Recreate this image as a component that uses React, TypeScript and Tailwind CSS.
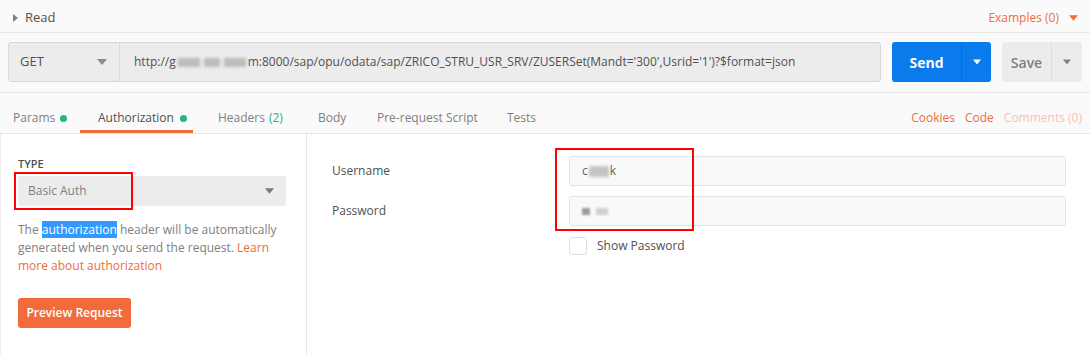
import { useState } from 'react';

const font = { fontFamily: '"Open Sans", "Noto Sans", sans-serif' };

function Caret({ className }: { className: string }) {
  return (
    <svg width="10" height="6" viewBox="0 0 10 6" className={className}>
      <path d="M0 0 L10 0 L5 6 Z" fill="currentColor" />
    </svg>
  );
}

function Smudge({ w }: { w: string }) {
  return (
    <span className={`inline-block h-[9px] ${w} bg-[#bdbdbd] blur-[1.5px] align-middle`} />
  );
}

export default function App() {
  const [show, setShow] = useState(false);

  return (
    <div
      style={font}
      className="w-[1090px] h-[354px] overflow-hidden bg-white text-[12px] text-[#505050]"
    >
      <div className="bg-[#fafafa]">
        <div className="h-[33px] flex items-center justify-between border-b border-[#e8e8e8] pl-[13px] pr-[12px] pt-[3px]">
          <div className="flex items-center">
            <svg width="5" height="8" viewBox="0 0 5 8" className="text-[#808080]">
              <path d="M0 0 L5 4 L0 8 Z" fill="currentColor" />
            </svg>
            <span className="ml-[7px] text-[13px] text-[#505050]">Read</span>
          </div>
          <div className="flex items-center text-[#f26b3a] text-[12px]">
            <span>Examples (0)</span>
            <Caret className="ml-[10px] text-[#f26b3a] w-[9px]" />
          </div>
        </div>

        <div className="flex items-center h-[60px] border-b border-[#e8e8e8] pl-[8px] pr-[8px] pb-[1px]">
          <div className="flex h-[40px] flex-1 rounded-[3px] border border-[#d8d8d8] bg-[#ececec]">
            <div className="w-[111px] flex items-center justify-between pl-[11px] pr-[12px] border-r border-[#d8d8d8]">
              <span className="text-[13px]">GET</span>
              <Caret className="text-[#8a8a8a]" />
            </div>
            <div className="flex items-center pl-[14px] whitespace-nowrap text-[#505050]">
              http://g
              <span className="inline-flex items-center gap-[4px] mx-[2px]">
                <Smudge w="w-[22px]" />
                <Smudge w="w-[16px]" />
                <Smudge w="w-[22px]" />
              </span>
              m:8000/sap/opu/odata/sap/ZRICO_STRU_USR_SRV/ZUSERSet(Mandt='300',Usrid='1')?$format=json
            </div>
          </div>
          <div className="ml-[11px] flex h-[40px] rounded-[3px] bg-[#097bed] text-white">
            <div className="w-[70px] flex items-center justify-center font-bold text-[14px] border-r border-[#0a6ad0]">
              Send
            </div>
            <div className="w-[29px] flex items-center justify-center">
              <Caret className="text-white w-[8px]" />
            </div>
          </div>
          <div className="ml-[11px] flex h-[40px] rounded-[3px] bg-[#ececec] text-[#808080]">
            <div className="w-[50px] flex items-center justify-center text-[14px] font-semibold border-r border-[#dcdcdc]">
              Save
            </div>
            <div className="w-[30px] flex items-center justify-center">
              <Caret className="text-[#808080] w-[8px]" />
            </div>
          </div>
        </div>

        <div className="flex justify-between items-stretch h-[41px] border-b border-[#e6e6e6] pr-[8px] whitespace-nowrap">
          <div className="flex items-stretch text-[#808080]">
            <div className="w-[80px] pl-[13px] pt-[10px] flex items-center">
              Params<span className="ml-[5px] w-[7px] h-[7px] rounded-full bg-[#26b47f]" />
            </div>
            <div className="w-[113px] pl-[18px] pt-[13px] flex items-center border-b-[3px] border-[#f26b3a] text-[#505050]">
              Authorization<span className="ml-[6px] w-[7px] h-[7px] rounded-full bg-[#26b47f]" />
            </div>
            <div className="w-[100px] pl-[25px] pt-[10px] flex items-center">
              Headers<span className="ml-[4px] text-[#26b47f]">(2)</span>
            </div>
            <div className="w-[59px] pl-[25px] pt-[10px] flex items-center">Body</div>
            <div className="w-[130px] pl-[25px] pt-[10px] flex items-center">Pre-request Script</div>
            <div className="pl-[25px] pt-[10px] flex items-center">Tests</div>
          </div>
          <div className="flex items-center gap-[10px] pt-[10px]">
            <span className="text-[#f26b3a]">Cookies</span>
            <span className="text-[#f26b3a]">Code</span>
            <span className="text-[#f8c3ad]">Comments (0)</span>
          </div>
        </div>
      </div>

      <div className="flex h-[220px]">
        <div className="w-[307px] border-l border-[#ececec] border-r border-r-[#e6e6e6] pl-[17px] pr-[20px] pt-[22px]">
          <div className="text-[11px] font-semibold text-[#505050] leading-[16px]">TYPE</div>
          <div className="relative mt-[4px]">
            <div className="h-[30px] rounded-[3px] bg-[#ececec] flex items-center justify-between pl-[10px] pr-[12px] text-[#808080]">
              <span>Basic Auth</span>
              <Caret className="text-[#7a7a7a] w-[9px]" />
            </div>
            <div className="absolute left-[-4px] top-[-4px] w-[119px] h-[38px] border-2 border-[#ff0000]" />
          </div>
          <div className="mt-[15px] leading-[18px] text-[#808080] whitespace-nowrap">
            <div>
              The <span className="bg-[#3399ff] text-white">authorization</span> header will be
              automatically
            </div>
            <div>
              generated when you send the request.{' '}
              <span className="text-[#f26b3a]">Learn</span>
            </div>
            <div className="text-[#f26b3a]">more about authorization</div>
          </div>
          <button className="mt-[23px] h-[30px] w-[113px] rounded-[3px] bg-[#f26b3a] text-white font-semibold text-[12px]">
            Preview Request
          </button>
        </div>

        <div className="flex-1 pl-[25px] pr-[24px] pt-[22px]">
          <div className="relative">
            <div className="flex items-center h-[30px]">
              <span className="w-[237px] text-[#505050]">Username</span>
              <div className="flex-1 h-[30px] rounded-[3px] border border-[#e4e4e4] bg-[#f9f9f9] flex items-center pl-[12px] text-[#606060]">
                c<span className="inline-block w-[20px] h-[11px] bg-[#c4c4c4] blur-[1.5px] mx-[1px]" />k
              </div>
            </div>
            <div className="flex items-center h-[30px] mt-[10px]">
              <span className="w-[237px] text-[#505050]">Password</span>
              <div className="flex-1 h-[30px] rounded-[3px] border border-[#e4e4e4] bg-[#f9f9f9] flex items-center pl-[12px] gap-[6px]">
                <span className="inline-block w-[8px] h-[7px] bg-[#9a9a9a] blur-[1px]" />
                <span className="inline-block w-[12px] h-[7px] bg-[#d0d0d0] blur-[1px]" />
              </div>
            </div>
            <div className="flex items-center mt-[11px] ml-[237px]">
              <button
                onClick={() => setShow(!show)}
                className="w-[18px] h-[18px] rounded-[3px] border border-[#dcdcdc] bg-white"
              />
              <span className="ml-[10px] text-[#505050]">Show Password</span>
            </div>
            <div className="absolute left-[223px] top-[-8px] w-[139px] h-[83px] border-2 border-[#ff0000]" />
          </div>
        </div>
      </div>
    </div>
  );
}
